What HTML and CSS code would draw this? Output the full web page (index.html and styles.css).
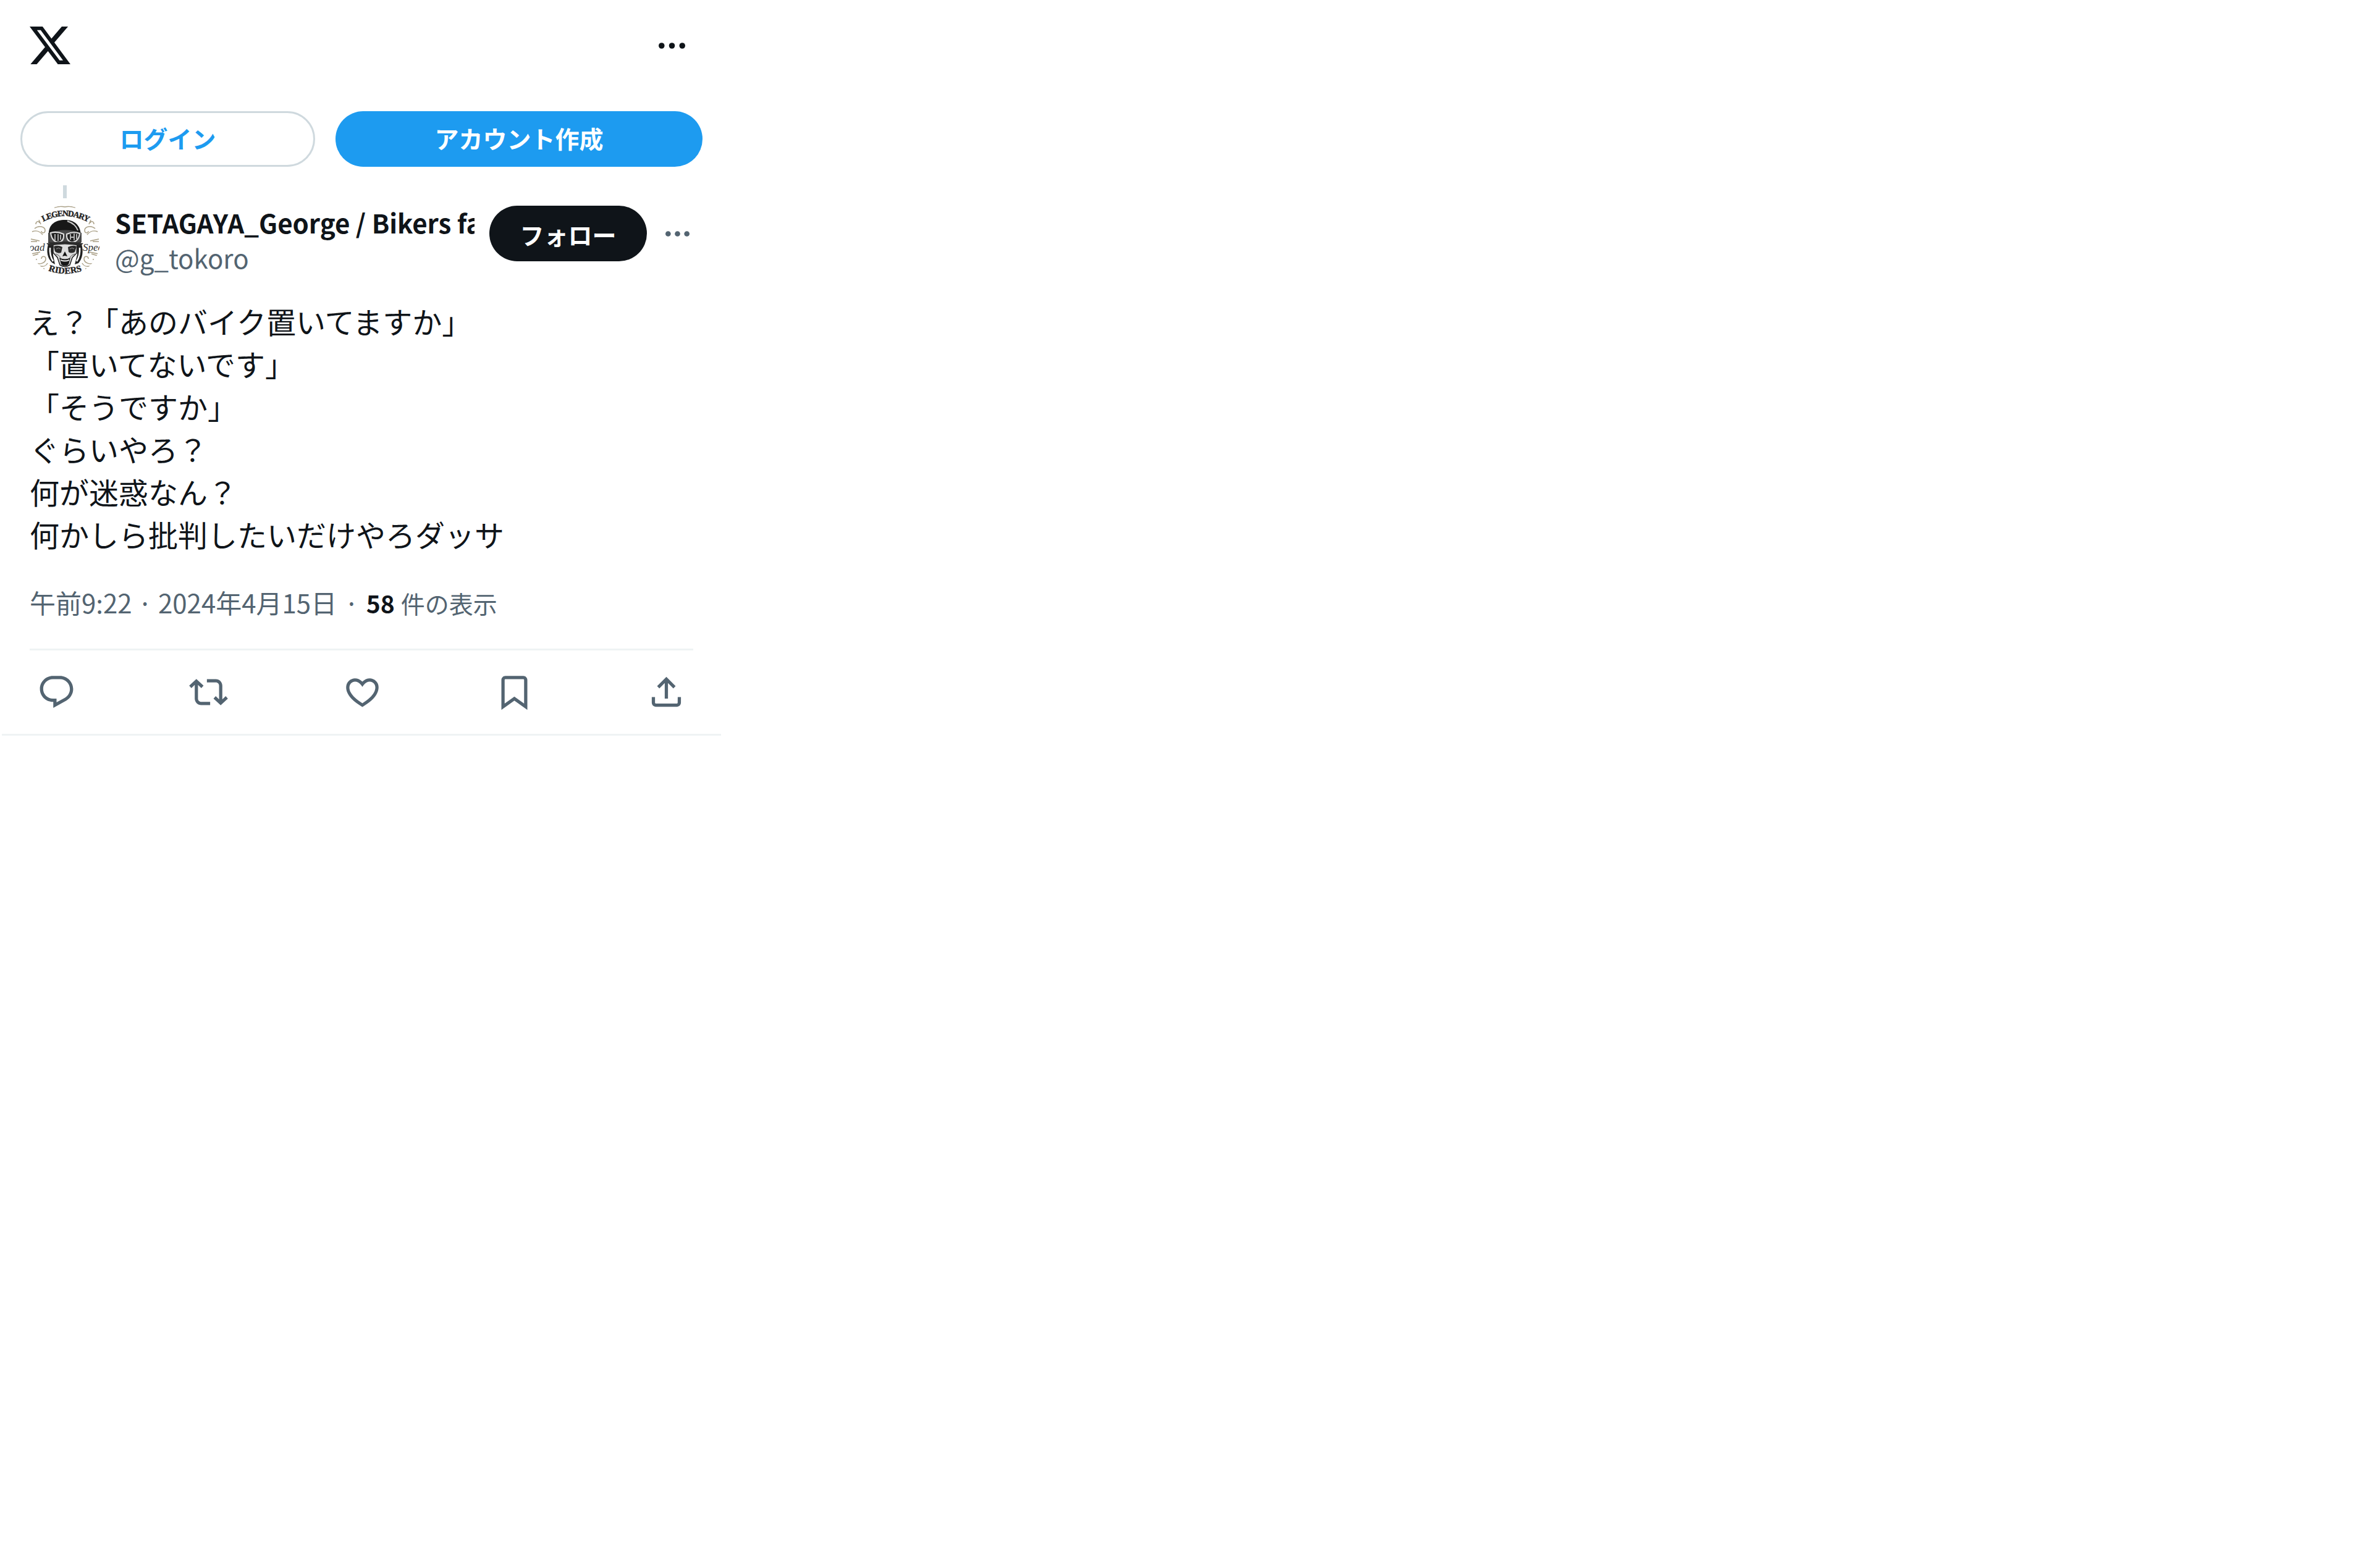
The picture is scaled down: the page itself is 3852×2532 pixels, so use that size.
FILE: index.html
```html
<!DOCTYPE html>
<html lang="ja">
<head>
<meta charset="utf-8">
<title>X</title>
<link rel="stylesheet" href="styles.css">
</head>
<body>
<div class="app">
  <header class="topbar">
    <svg class="logo" viewBox="1.254 2.25 21.573 19.5" preserveAspectRatio="none"><path d="M18.244 2.25h3.308l-7.227 8.26 8.502 11.24H16.17l-5.214-6.817L4.99 21.75H1.68l7.73-8.835L1.254 2.25H8.08l4.713 6.231zm-1.161 17.52h1.833L7.084 4.126H5.117z"/></svg>
    <svg class="dots dots-top" viewBox="3 10 18 4"><circle cx="5" cy="12" r="2"/><circle cx="12" cy="12" r="2"/><circle cx="19" cy="12" r="2"/></svg>
  </header>
  <nav class="auth">
    <a class="btn btn-login"><span>ログイン</span></a>
    <a class="btn btn-signup"><span>アカウント作成</span></a>
  </nav>
  <article class="post">
    <div class="thread-line"></div>
    <div class="author">
      <svg class="avatar" viewBox="0 0 114 114">
        <defs>
          <clipPath id="round"><circle cx="57" cy="57" r="57"/></clipPath>
          <path id="arc-top" d="M22 26Q57 7 95 27"/>
          <path id="arc-bottom" d="M30 105Q57 115 86 105"/>
          <g id="scroll" fill="none" stroke="#aaa087" stroke-width="1.5">
            <path d="M8 37C15 31 25 34 25 40c0 5-6 5-6 1"/>
            <path d="M4 42c8-3 14 1 17 5M10 30c0-5 5-6 6-2M15 23l3 7"/>
            <path d="M2 54l14 3M2 58h10"/>
            <path d="M40 3q9-3 17-1"/>
          </g>
          <g id="scroll-low" fill="none" stroke="#aaa087" stroke-width="1.5">
            <path d="M3 78l14-3M4 81l10-3"/>
            <path d="M7 92c10 5 19 0 19-6 0-5-7-5-7 0"/>
            <path d="M14 97c8 3 13 0 15-4"/>
            <path d="M11 86v2M23 101v2"/>
          </g>
        </defs>
        <g clip-path="url(#round)">
          <rect width="114" height="114" fill="#fefefe"/>
          <use href="#scroll"/><use href="#scroll" transform="matrix(-1 0 0 1 114 0)"/>
          <use href="#scroll-low"/><use href="#scroll-low" transform="matrix(-1 0 0 1 114 0)"/>
          <path d="M30 62Q25 81 36 92L41 95 38 80 38 62ZM84 62q5 19-5 31l-6 2 4-16 0-17Z" fill="#222"/>
          <path d="M33 68q-1 13 5 22M81 68q1 13-5 22" fill="none" stroke="#fff" stroke-width="2.5"/>
          <path d="M31 45C31 30 42 23 57 23s25 8 26 24v13H30Z" fill="#181818"/>
          <path d="M61 25q13 4 17 15" fill="none" stroke="#ccc" stroke-width="2"/>
          <path d="M38 60q19-4 39 0l-1 17-7 7-4 12q-8 5-16 0l-4-12-7-8Z" fill="#ddd" stroke="#222" stroke-width="1.5"/>
          <path d="M39 66q7-3 14 1l-2 9q-6 2-10-2ZM62 67q8-4 14-1l-3 9q-6 3-10 0Z" fill="#2b2b2b"/>
          <path d="M43 70q4-3 7 0M65 70q4-3 7 0" stroke="#999" fill="none"/>
          <path d="M57 74l-4 8 4-1 4 1Z" fill="#111"/>
          <path d="M42 78q6 2 8 6M73 78q-6 2-8 6" stroke="#555" fill="none"/>
          <path d="M48 84q9 5 18 0l-3 11q-6 5-12 0Z" fill="#181818"/>
          <path d="M50 87q7 3 14 0v2q-7 3-14 0Z" fill="#eee"/>
          <path d="M30 44Q57 35 84 44v15q-26 5-54 0Z" fill="#484848"/>
          <path d="M34 44q10-3 21 2 1 12-8 13-11 0-13-15ZM60 46q11-5 21-1-2 14-13 14-9-2-8-13Z" fill="#222" stroke="#ddd" stroke-width="2"/>
          <path d="M41 46v10M46 46v11M50 47v8M66 46v9M72 45v11M66 51h6M76 46v8" stroke="#bbb" stroke-width="1.8"/>
          <path d="M27 61q30-6 60 0l-5 4q-25-5-50 0Z" fill="#2b2b2b"/>
          <text class="emblem" font-size="13.5"><textPath href="#arc-top" textLength="76">LEGENDARY</textPath></text>
          <text class="emblem" font-size="14.5"><textPath href="#arc-bottom" textLength="56">RIDERS</textPath></text>
          <text class="script" x="-1" y="73">oad</text>
          <text class="script" x="86" y="73">Spee</text>
        </g>
      </svg>
      <div class="names">
        <div class="name">SETAGAYA_George / Bikers fa</div>
        <div class="handle">@g_tokoro</div>
      </div>
      <a class="btn btn-follow"><span>フォロー</span></a>
      <svg class="dots dots-post" viewBox="3 10 18 4"><circle cx="5" cy="12" r="2"/><circle cx="12" cy="12" r="2"/><circle cx="19" cy="12" r="2"/></svg>
    </div>
    <p class="body">え？「あのバイク置いてますか」<br>「置いてないです」<br>「そうですか」<br>ぐらいやろ？<br>何が迷惑なん？<br>何かしら批判したいだけやろダッサ</p>
    <div class="meta"><span>午前9:22 · 2024年4月15日</span><span class="sep">·</span><b>58</b><span class="views">件の表示</span></div>
    <div class="actions">
      <svg viewBox="0 0 24 24"><path d="M1.751 10c0-4.42 3.584-8 8.005-8h4.366c4.49 0 8.129 3.64 8.129 8.13 0 2.96-1.607 5.68-4.196 7.11l-8.054 4.46v-3.69h-.067c-4.49.1-8.183-3.51-8.183-8.01zm8.005-6c-3.317 0-6.005 2.69-6.005 6 0 3.37 2.77 6.08 6.138 6.01l.351-.01h1.761v2.3l5.087-2.81c1.951-1.08 3.163-3.13 3.163-5.36 0-3.39-2.744-6.13-6.129-6.13H9.756z"/></svg>
      <svg viewBox="0 0 24 24"><path d="M4.5 3.88l4.432 4.14-1.364 1.46L5.5 7.55V16c0 1.1.896 2 2 2H13v2H7.5c-2.209 0-4-1.79-4-4V7.55L1.432 9.48.068 8.02 4.5 3.88zM16.5 6H11V4h5.5c2.209 0 4 1.79 4 4v8.45l2.068-1.93 1.364 1.46-4.432 4.14-4.432-4.14 1.364-1.46 2.068 1.93V8c0-1.1-.896-2-2-2z"/></svg>
      <svg viewBox="0 0 24 24"><path d="M16.697 5.5c-1.222-.06-2.679.51-3.89 2.16l-.805 1.09-.806-1.09C9.984 6.01 8.526 5.44 7.304 5.5c-1.243.07-2.349.78-2.91 1.91-.552 1.12-.633 2.78.479 4.82 1.074 1.97 3.257 4.27 7.129 6.61 3.87-2.34 6.052-4.64 7.126-6.61 1.111-2.04 1.03-3.7.477-4.82-.561-1.13-1.666-1.84-2.908-1.91zm4.187 7.69c-1.351 2.48-4.001 5.12-8.379 7.67l-.503.3-.504-.3c-4.379-2.55-7.029-5.19-8.382-7.67-1.36-2.5-1.41-4.86-.514-6.67.887-1.79 2.647-2.91 4.601-3.01 1.651-.09 3.368.56 4.798 2.01 1.429-1.45 3.146-2.1 4.796-2.01 1.954.1 3.714 1.22 4.601 3.01.896 1.81.846 4.17-.514 6.67z"/></svg>
      <svg viewBox="0 0 24 24"><path d="M4 4.5C4 3.12 5.119 2 6.5 2h11C18.881 2 20 3.12 20 4.5v18.44l-8-5.71-8 5.71V4.5zM6.5 4c-.276 0-.5.22-.5.5v14.56l6-4.29 6 4.29V4.5c0-.28-.224-.5-.5-.5h-11z"/></svg>
      <svg viewBox="0 0 24 24"><path d="M12 2.59l5.7 5.7-1.41 1.42L13 6.41V16h-2V6.41l-3.3 3.3-1.41-1.42L12 2.59zM21 15l-.02 3.51c0 1.38-1.12 2.49-2.5 2.49H5.5C4.11 21 3 19.88 3 18.5V15h2v3.5c0 .28.22.5.5.5h12.98c.28 0 .5-.22.5-.5L19 15h2z"/></svg>
    </div>
  </article>
</div>
</body>
</html>
```
FILE: styles.css
```css
* { box-sizing: border-box; }
body {
  margin: 0;
  background: #fff;
  color: #0f1419;
  font-family: "Noto Sans CJK JP", sans-serif;
}
svg { display: block; flex: none; }
.app { width: 1170px; }
.topbar {
  display: flex;
  align-items: center;
  justify-content: space-between;
  height: 147px;
  padding: 0 61px 0 48px;
}
.logo { width: 66px; height: 61px; fill: #0f1419; }
.dots-top { width: 43px; height: 10px; fill: #0f1419; }
.auth {
  display: grid;
  grid-template-columns: 477px 594px;
  gap: 33px;
  padding: 33px 33px 0;
}
.btn {
  display: flex;
  align-items: center;
  justify-content: center;
  height: 90px;
  border-radius: 45px;
  font-size: 39px;
  font-weight: 700;
  line-height: 57px;
}
.btn-login { border: 3px solid #cfd9de; color: #1d9bf0; padding-bottom: 3px; }
.btn-signup { background: #1d9bf0; color: #fff; padding-bottom: 3px; }
.post {
  width: 1164px;
  margin: 30px 0 0 3px;
  padding: 0 45px;
  border-bottom: 3px solid #eff3f4;
}
.thread-line { width: 6px; height: 21px; margin-left: 54px; background: #cfd9de; }
.author { display: flex; margin-top: 12px; }
.avatar { width: 114px; height: 114px; }
.emblem { font-family: "Liberation Serif", serif; font-weight: 700; fill: #222; stroke: #222; stroke-width: .4px; }
.script { font: italic 17px "Liberation Serif", serif; fill: #333; }
.names { width: 582px; margin: -2px 24px 0 24px; overflow: hidden; }
.name, .handle { font-size: 42px; line-height: 57px; white-space: nowrap; }
.name { font-weight: 700; }
.handle { color: #536471; }
.btn-follow { width: 255px; background: #0f1419; color: #fff; padding-top: 3px; }
.dots-post { width: 39px; height: 9px; margin: 41px 0 0 30px; fill: #536471; }
.body { margin: 38px 0 46px; font-size: 48px; line-height: 69px; }
.meta {
  display: flex;
  height: 105px;
  align-items: flex-start;
  font-size: 42px;
  line-height: 60px;
  color: #536471;
}
.sep { margin: 0 12px; }
.meta b { color: #0f1419; font-size: 39px; line-height: 62px; margin-right: 10px; }
.views { font-size: 39px; line-height: 62px; }
.actions {
  display: flex;
  justify-content: space-between;
  align-items: center;
  height: 138px;
  padding: 0 12px;
  border-top: 3px solid #eff3f4;
}
.actions svg { width: 63px; height: 63px; fill: #536471; overflow: visible; }
.actions svg:nth-child(2) { margin: 0 1px 0 -1px; }
.actions svg:nth-child(3), .actions svg:nth-child(4) { margin: 0 -1px 0 1px; }
```
